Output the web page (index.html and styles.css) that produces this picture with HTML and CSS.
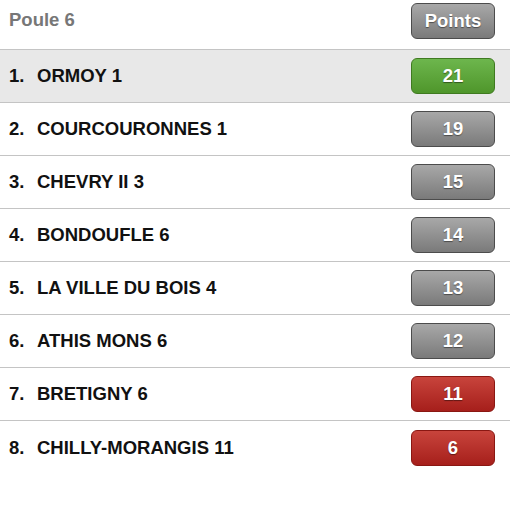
FILE: index.html
```html
<!DOCTYPE html>
<html lang="fr">
<head>
<meta charset="utf-8">
<title>Poule 6</title>
<link rel="stylesheet" href="styles.css">
</head>
<body>
<div class="ranking">
  <div class="head">
    <span class="title">Poule 6</span>
    <span class="badge grey">Points</span>
  </div>
  <ul class="list">
    <li class="row first"><span class="rank">1.</span><span class="team">ORMOY 1</span><span class="badge green">21</span></li>
    <li class="row"><span class="rank">2.</span><span class="team">COURCOURONNES 1</span><span class="badge grey">19</span></li>
    <li class="row"><span class="rank">3.</span><span class="team">CHEVRY II 3</span><span class="badge grey">15</span></li>
    <li class="row"><span class="rank">4.</span><span class="team">BONDOUFLE 6</span><span class="badge grey">14</span></li>
    <li class="row"><span class="rank">5.</span><span class="team">LA VILLE DU BOIS 4</span><span class="badge grey">13</span></li>
    <li class="row"><span class="rank">6.</span><span class="team">ATHIS MONS 6</span><span class="badge grey">12</span></li>
    <li class="row"><span class="rank">7.</span><span class="team">BRETIGNY 6</span><span class="badge red">11</span></li>
    <li class="row last"><span class="rank">8.</span><span class="team">CHILLY-MORANGIS 11</span><span class="badge red">6</span></li>
  </ul>
</div>
</body>
</html>
```
FILE: styles.css
```css
* { box-sizing: border-box; }
html, body { margin: 0; padding: 0; background: #fff; }
body { font-family: "Liberation Sans", Arial, sans-serif; }
.ranking { width: 510px; }
.head {
  height: 50px;
  display: flex;
  justify-content: space-between;
  align-items: flex-start;
  padding: 3px 15px 0 9px;
  border-bottom: 1px solid #c4c4c4;
}
.title {
  font-size: 18.5px;
  font-weight: bold;
  color: #777;
  line-height: 34px;
}
.list { list-style: none; margin: 0; padding: 0; }
.row {
  height: 53px;
  display: flex;
  align-items: center;
  padding: 0 15px 0 9px;
  border-bottom: 1px solid #c4c4c4;
  font-size: 18.5px;
  font-weight: bold;
  color: #111;
}
.row.first { background: #e8e8e8; }
.row.last { border-bottom: none; }
.rank { width: 28px; }
.team { flex: 1; }
.badge {
  width: 84px;
  height: 36px;
  border-radius: 6px;
  border: 1px solid #555;
  display: flex;
  align-items: center;
  justify-content: center;
  font-size: 18.5px;
  font-weight: bold;
  color: #fff;
  text-shadow: 0 1px 1px rgba(0,0,0,0.45);
}
.badge.grey {
  background: linear-gradient(#a8a8a8, #7a7a7a);
  border-color: #4c4c4c;
}
.badge.green {
  background: linear-gradient(#6db64d, #4f962b);
  border-color: #3f7a20;
}
.badge.red {
  background: linear-gradient(#c8443c, #a61f1b);
  border-color: #8a1712;
}
```
